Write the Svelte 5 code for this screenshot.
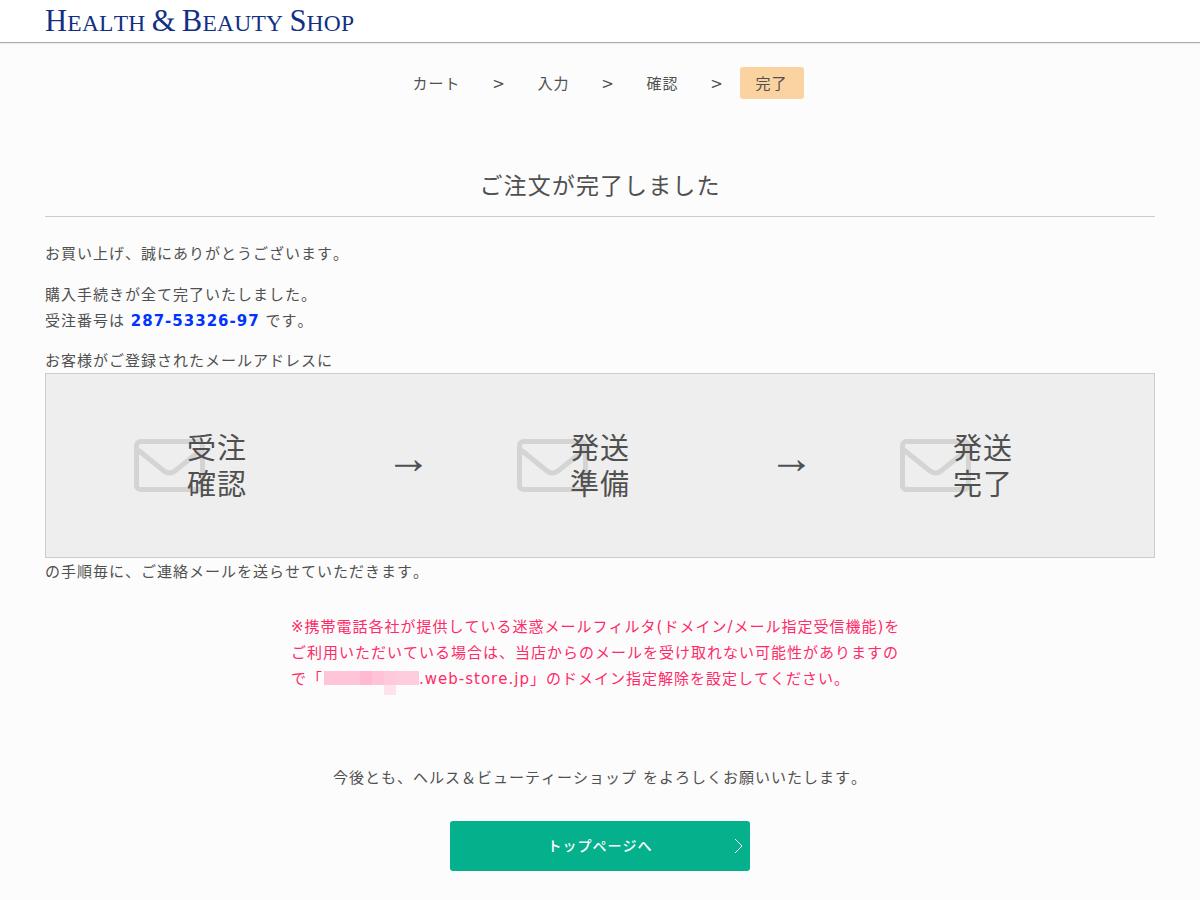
<script>
  const steps = [
    { label: "カート" },
    { label: "入力" },
    { label: "確認" },
    { label: "完了", current: true },
  ];
  const mails = [
    ["受注", "確認"],
    ["発送", "準備"],
    ["発送", "完了"],
  ];
  // mosaic cells over the masked domain: [width, opacity]
  const mosaic = [
    [36, 0.75], [12, 0.9], [12, 0.8], [12, 0.7], [23, 0.65],
  ];
</script>

<header class="site-header">
  <div class="logo"><span>H</span>EALTH <span>&amp;</span> <span>B</span>EAUTY <span>S</span>HOP</div>
</header>

<main class="page">
  <ol class="steps">
    {#each steps as step, i}
      {#if i > 0}<li class="sep">&gt;</li>{/if}
      <li class="step" class:current={step.current}>{step.label}</li>
    {/each}
  </ol>

  <h1>ご注文が完了しました</h1>

  <p>お買い上げ、誠にありがとうございます。</p>
  <p>購入手続きが全て完了いたしました。<br />受注番号は <strong>287-53326-97</strong> です。</p>
  <p class="tight">お客様がご登録されたメールアドレスに</p>

  <div class="flow">
    {#each mails as lines, i}
      <div class="mail">
        <svg class="envelope" width="71" height="53" viewBox="0 0 71 53" fill="none" stroke="#d4d4d4" stroke-width="5">
          <rect x="2.5" y="2.5" width="66" height="48" rx="4" />
          <path d="M4 11 L30 32 Q35.500 36 41 32 L67 11" />
        </svg>
        <div class="mail-label">{lines[0]}<br />{lines[1]}</div>
      </div>
      {#if i < mails.length - 1}<div class="arrow">→</div>{/if}
    {/each}
  </div>

  <p class="after">の手順毎に、ご連絡メールを送らせていただきます。</p>

  <p class="notice">
    ※携帯電話各社が提供している迷惑メールフィルタ(ドメイン/メール指定受信機能)をご利用いただいている場合は、当店からのメールを受け取れない可能性がありますので「<span class="mask">{#each mosaic as cell}<i style="width:{cell[0]}px;opacity:{cell[1]}"></i>{/each}<b></b></span>.web-store.jp」のドメイン指定解除を設定してください。
  </p>

  <p class="closing">今後とも、ヘルス＆ビューティーショップ をよろしくお願いいたします。</p>

  <div class="actions">
    <a class="top-btn" href="#top">
      トップページへ
      <svg class="chev" width="11" height="16" viewBox="0 0 11 16" fill="none" stroke="#fff" stroke-width="1">
        <path d="M2 1 L9 8 L2 15" />
      </svg>
    </a>
  </div>
</main>

<style>
  :global(body) {
    background: #fcfcfc;
    color: #505050;
    font-family: "DejaVu Sans", "Noto Sans CJK JP", sans-serif;
    font-size: 15px;
    font-kerning: none;
    letter-spacing: 1px;
    line-height: 26px;
  }

  .site-header {
    height: 42px;
    background: #fff;
    border-bottom: 1px solid #aaa;
    box-shadow: 0 1px 1px rgba(0, 0, 0, 0.06);
    padding: 0 45px;
  }

  .logo {
    font-family: "Liberation Serif", serif;
    font-size: 23.500px;
    letter-spacing: 0.25px;
    line-height: 42px;
    color: #123083;
  }

  .logo span {
    font-size: 30.500px;
  }

  .page {
    padding: 24px 45px 0;
  }

  .steps {
    display: flex;
    justify-content: center;
    list-style: none;
    margin: 0;
    padding: 0;
    line-height: 32px;
  }

  .step {
    padding: 1px 16px 0;
    height: 31px;
    border-radius: 3px;
  }

  .step.current {
    background: #fbd3a0;
  }

  .sep {
    width: 45px;
    padding-top: 1px;
    text-align: center;
  }

  h1 {
    margin: 68px 0 24px;
    padding-bottom: 12px;
    border-bottom: 1px solid #ccc;
    font-size: 23px;
    font-weight: 400;
    letter-spacing: 1.100px;
    line-height: 36px;
    text-align: center;
  }

  p {
    margin: 0 0 15px;
  }

  p.tight {
    margin-bottom: 0;
    line-height: 24px;
  }

  strong {
    color: #0033ff;
    font-weight: 700;
    line-height: 1;
  }

  .flow {
    box-sizing: border-box;
    height: 185px;
    display: flex;
    align-items: center;
    padding-left: 88px;
    background: #eee;
    border: 1px solid #ccc;
  }

  .mail {
    flex: none;
    width: 258px;
    display: flex;
    align-items: center;
  }

  .envelope {
    flex: none;
  }

  .mail-label {
    margin-left: -18px;
    padding-top: 1px;
    margin-bottom: -1px;
    font-size: 29px;
    line-height: 36px;
  }

  .arrow {
    flex: none;
    width: 131px;
    margin-left: -6px;
    margin-top: -16px;
    font-family: "Liberation Sans", sans-serif;
    font-size: 45px;
    letter-spacing: 0;
  }

  .after {
    margin: 1px 0 0;
  }

  .notice {
    width: 618px;
    margin: 29px auto 0;
    color: #ff2a68;
  }

  .mask {
    position: relative;
    display: inline-flex;
    width: 95px;
    height: 14px;
    vertical-align: -1px;
    margin-left: 1px;
  }

  .mask i {
    display: block;
    flex: none;
    height: 14px;
    background: #ffb3cc;
  }

  .mask b {
    position: absolute;
    left: 60px;
    top: 14px;
    width: 12px;
    height: 10px;
    background: #ffe3ec;
  }

  .closing {
    margin: 73px 0 0;
    text-align: center;
  }

  .actions {
    display: flex;
    justify-content: center;
    margin-top: 30px;
  }

  .top-btn {
    position: relative;
    width: 300px;
    height: 50px;
    display: flex;
    align-items: center;
    justify-content: center;
    background: #05b08c;
    border-radius: 3px;
    color: #fff;
    font-size: 14px;
    font-weight: 500;
    text-decoration: none;
  }

  .chev {
    position: absolute;
    right: 6px;
    top: 17px;
  }
</style>
